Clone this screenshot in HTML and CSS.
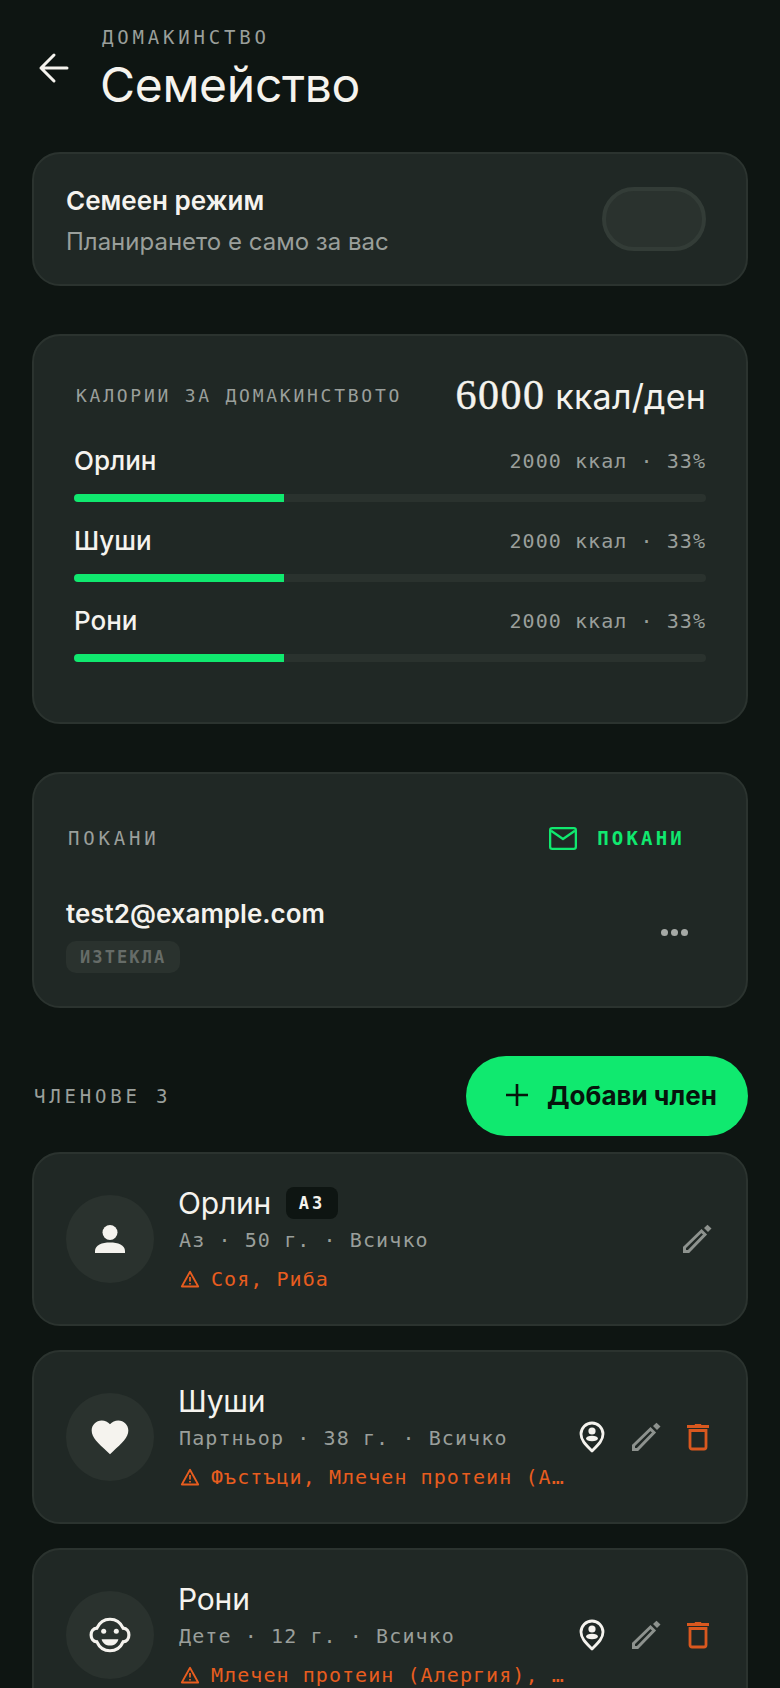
FILE: index.html
```html
<!DOCTYPE html>
<html lang="bg">
<head>
<meta charset="utf-8">
<title>Семейство</title>
<link rel="stylesheet" href="styles.css">
</head>
<body>
<main class="page">
  <header class="top">
    <svg class="back" viewBox="0 0 32 32"><path d="M29 16H3M16 3 3 16l13 13"/></svg>
    <div class="top-text">
      <div class="eyebrow">ДОМАКИНСТВО</div>
      <h1 class="title">Семейство</h1>
    </div>
  </header>

  <section class="card mode">
    <div class="mode-text">
      <div class="mode-title">Семеен режим</div>
      <div class="mode-sub">Планирането е само за вас</div>
    </div>
    <div class="toggle"></div>
  </section>

  <section class="card cal">
    <div class="cal-head">
      <span class="label cal-label">КАЛОРИИ ЗА ДОМАКИНСТВОТО</span>
      <span class="total"><span class="total-num">6000</span> ккал/ден</span>
    </div>
    <div class="cal-row">
      <div class="cal-line"><span class="cal-name">Орлин</span><span class="cal-val">2000 ккал · 33%</span></div>
      <div class="bar"><div class="fill"></div></div>
    </div>
    <div class="cal-row">
      <div class="cal-line"><span class="cal-name">Шуши</span><span class="cal-val">2000 ккал · 33%</span></div>
      <div class="bar"><div class="fill"></div></div>
    </div>
    <div class="cal-row">
      <div class="cal-line"><span class="cal-name">Рони</span><span class="cal-val">2000 ккал · 33%</span></div>
      <div class="bar"><div class="fill"></div></div>
    </div>
  </section>

  <section class="card inv">
    <div class="inv-head">
      <span class="label inv-label">ПОКАНИ</span>
      <span class="inv-btn">
        <svg class="mail" viewBox="0 0 27 22"><rect x="1.100" y="1.100" width="24.800" height="19.800" rx="2"/><path d="M2 3.500l11.500 8 11.500-8"/></svg>
        ПОКАНИ
      </span>
    </div>
    <div class="inv-row">
      <div>
        <div class="inv-mail">test2@example.com</div>
        <span class="expired">ИЗТЕКЛА</span>
      </div>
      <div class="dots"><i></i><i></i><i></i></div>
    </div>
  </section>

  <div class="sec-head">
    <span class="label sec-label">ЧЛЕНОВЕ 3</span>
    <span class="add">
      <svg class="plus" viewBox="0 0 24 24"><path d="M12 1v22M1 12h22"/></svg>
      Добави член
    </span>
  </div>

  <section class="card member">
    <div class="avatar">
      <svg class="av-ic" viewBox="0 0 32 32"><circle cx="16" cy="9.500" r="7.500"/><path d="M1 30v-2C1 22 8 19.500 16 19.500S31 22 31 28v2z"/></svg>
    </div>
    <div class="info">
      <div class="name-line"><span class="name">Орлин</span><span class="me">АЗ</span></div>
      <div class="meta">Аз · 50 г. · Всичко</div>
      <div class="warn">
        <svg class="tri" viewBox="0 0 20 18"><path class="tri-o" d="M10 1.800 1.800 16.500h16.400z"/><path class="tri-m" d="M10 7v4.500M10 13v1.500"/></svg>
        <span class="warn-text">Соя, Риба</span>
      </div>
    </div>
    <div class="actions">
      <svg class="ic-edit" viewBox="0 0 30 30"><path class="pen" d="M2.500 23.500 19.500 7 23 10.500 6.500 27.500H2.500z"/><path class="pen-tip" d="M22 4 25.500.8 29.500 4.500 26 8z"/></svg>
    </div>
  </section>

  <section class="card member">
    <div class="avatar">
      <svg class="av-ic av-heart" viewBox="0 0 24 24"><path d="M12 21.350l-1.450-1.320C5.400 15.360 2 12.280 2 8.500 2 5.420 4.420 3 7.500 3c1.740 0 3.410.81 4.500 2.090C13.090 3.810 14.760 3 16.500 3 19.580 3 22 5.420 22 8.500c0 3.780-3.400 6.860-8.550 11.540L12 21.350z"/></svg>
    </div>
    <div class="info">
      <div class="name-line"><span class="name">Шуши</span></div>
      <div class="meta">Партньор · 38 г. · Всичко</div>
      <div class="warn">
        <svg class="tri" viewBox="0 0 20 18"><path class="tri-o" d="M10 1.800 1.800 16.500h16.400z"/><path class="tri-m" d="M10 7v4.500M10 13v1.500"/></svg>
        <span class="warn-text">Фъстъци, Млечен протеин (А…</span>
      </div>
    </div>
    <div class="actions">
      <svg class="ic-pin" viewBox="0 0 26 32"><path class="pin-o" d="M13 30C7 24 2 19.500 2 13a11 11 0 0 1 22 0c0 6.500-5 11-11 17z"/><circle class="pin-f" cx="13" cy="10" r="3.600"/><ellipse class="pin-f" cx="13" cy="17.500" rx="6" ry="2.800"/></svg>
      <svg class="ic-edit" viewBox="0 0 30 30"><path class="pen" d="M2.500 23.500 19.500 7 23 10.500 6.500 27.500H2.500z"/><path class="pen-tip" d="M22 4 25.500.8 29.500 4.500 26 8z"/></svg>
      <svg class="ic-trash" viewBox="0 0 22 28"><path class="tr-o" d="M3 7.500h16V24a2 2 0 0 1-2 2H5a2 2 0 0 1-2-2zM0 3.500h22"/><path class="tr-f" d="M7 3.500 8 1h6l1 2.500z"/></svg>
    </div>
  </section>

  <section class="card member">
    <div class="avatar">
      <svg class="av-ic av-baby" viewBox="0 0 40 34"><path class="bb-o" d="M7.500 10.500C10 5 14.500 2 20 2s10 3 12.500 8.500c3.500.3 5.500 3 5.500 6.500s-2 6.200-5.500 6.500C30 29 25.500 32 20 32S10 29 7.500 23.500C4 23.200 2 20.500 2 17s2-6.200 5.500-6.500z"/><circle class="bb-f" cx="14" cy="13.500" r="2.400"/><circle class="bb-f" cx="26" cy="13.500" r="2.400"/><path class="bb-f" d="M12 21h16c-1 4-4 6-8 6s-7-2-8-6z"/></svg>
    </div>
    <div class="info">
      <div class="name-line"><span class="name">Рони</span></div>
      <div class="meta">Дете · 12 г. · Всичко</div>
      <div class="warn">
        <svg class="tri" viewBox="0 0 20 18"><path class="tri-o" d="M10 1.800 1.800 16.500h16.400z"/><path class="tri-m" d="M10 7v4.500M10 13v1.500"/></svg>
        <span class="warn-text">Млечен протеин (Алергия), …</span>
      </div>
    </div>
    <div class="actions">
      <svg class="ic-pin" viewBox="0 0 26 32"><path class="pin-o" d="M13 30C7 24 2 19.500 2 13a11 11 0 0 1 22 0c0 6.500-5 11-11 17z"/><circle class="pin-f" cx="13" cy="10" r="3.600"/><ellipse class="pin-f" cx="13" cy="17.500" rx="6" ry="2.800"/></svg>
      <svg class="ic-edit" viewBox="0 0 30 30"><path class="pen" d="M2.500 23.500 19.500 7 23 10.500 6.500 27.500H2.500z"/><path class="pen-tip" d="M22 4 25.500.8 29.500 4.500 26 8z"/></svg>
      <svg class="ic-trash" viewBox="0 0 22 28"><path class="tr-o" d="M3 7.500h16V24a2 2 0 0 1-2 2H5a2 2 0 0 1-2-2zM0 3.500h22"/><path class="tr-f" d="M7 3.500 8 1h6l1 2.500z"/></svg>
    </div>
  </section>
</main>
</body>
</html>
```

FILE: styles.css
```css
* { box-sizing: border-box; }
html, body { margin: 0; height: 1688px; overflow: hidden; background: #0e1512; }
body { font-family: "Inter", "Noto Sans", sans-serif; color: #f5f3ee; }
.page { padding: 24px 32px 0; display: flex; flex-direction: column; }

.top { display: flex; align-items: flex-start; gap: 30px; height: 128px; padding-left: 6px; }
.back { width: 32px; height: 32px; margin-top: 28px; fill: none; stroke: #f5f3ee; stroke-width: 3; stroke-linecap: round; stroke-linejoin: round; flex: none; }
.eyebrow { font: 400 19px/26px "DejaVu Sans Mono", monospace; letter-spacing: 3.800px; color: #9a9f9b; padding-left: 2px; }
.title { margin: 5px 0 0; font: 400 48px/60px "Inter", sans-serif; letter-spacing: -.3px; }

.card { background: #202825; border: 2px solid #2b332f; border-radius: 28px; }
.label { font-family: "DejaVu Sans Mono", monospace; font-size: 19px; letter-spacing: 3.800px; color: #9a9f9b; }

.mode { height: 134px; display: flex; justify-content: space-between; align-items: center; padding: 0 40px 0 32px; }
.mode-text { padding-top: 9px; }
.mode-title { font-size: 26px; line-height: 36px; font-weight: 600; }
.mode-sub { font-size: 24px; line-height: 46px; color: #9a9f9b; }
.toggle { width: 104px; height: 64px; border-radius: 32px; background: #2a322e; border: 4px solid #333c37; }

.cal { margin-top: 48px; height: 390px; padding: 36px 40px 0; }
.cal-head { display: flex; justify-content: space-between; align-items: center; height: 46px; margin-bottom: 23px; }
.cal-label { font-size: 18px; letter-spacing: 2.750px; padding-left: 2px; }
.total { font-size: 34px; letter-spacing: .2px; }
.total-num { font-family: "Liberation Serif", serif; font-size: 42px; letter-spacing: 1.500px; -webkit-text-stroke: .4px #f5f3ee; }
.cal-row { height: 80px; }
.cal-line { display: flex; justify-content: space-between; align-items: center; height: 38px; margin-bottom: 15px; }
.cal-name { font-size: 26px; font-weight: 500; }
.cal-val { font: 400 20px "DejaVu Sans Mono", monospace; letter-spacing: 1.060px; color: #9a9f9b; padding-top: 2px; }
.bar { height: 8px; border-radius: 4px; background: #2a322e; overflow: hidden; }
.fill { width: 33.300%; height: 100%; background: #10e96f; }

.inv { margin-top: 48px; height: 236px; padding: 0 32px; }
.inv-head { display: flex; justify-content: space-between; align-items: center; height: 68px; margin-top: 30px; padding: 0 29px 0 2px; }
.inv-btn { display: flex; align-items: center; gap: 20px; font: 700 19px "DejaVu Sans Mono", monospace; letter-spacing: 3.200px; color: #10e96f; }
.mail { width: 28px; height: 23px; fill: none; stroke: #10e96f; stroke-width: 2.200; stroke-linejoin: round; }
.inv-row { display: flex; justify-content: space-between; align-items: center; padding-right: 26px; }
.inv-mail { font-size: 26px; line-height: 36px; font-weight: 600; margin-top: 24px; }
.expired { display: inline-block; margin-top: 9px; height: 32px; padding: 0 14px; border-radius: 10px; background: #2a322e; font: 700 17px/32px "DejaVu Sans Mono", monospace; letter-spacing: 2.100px; color: #666c68; }
.dots { display: flex; gap: 3px; margin-top: 20px; }
.dots i { width: 7px; height: 7px; border-radius: 50%; background: #a5a9a6; }

.sec-head { display: flex; justify-content: space-between; align-items: center; height: 80px; margin-top: 48px; }
.sec-label { padding-left: 2px; }
.add { width: 282px; height: 80px; border-radius: 40px; background: #10e96f; color: #06140c; display: flex; align-items: center; gap: 18px; padding: 0 0 2px 39px; font-size: 26px; font-weight: 700; }
.plus { width: 24px; height: 24px; fill: none; stroke: #06140c; stroke-width: 2.600; }

.member { margin-top: 16px; height: 174px; display: flex; align-items: center; padding: 0 37px 0 32px; }
.member + .member { margin-top: 24px; }
.avatar { width: 88px; height: 88px; border-radius: 50%; background: #2a322e; display: flex; align-items: center; justify-content: center; flex: none; margin-right: 24px; }
.av-ic { width: 32px; height: 32px; fill: #f5f3ee; }
.av-heart { width: 44px; height: 44px; }
.av-baby { width: 42px; height: 36px; }
.bb-o { fill: none; stroke: #f5f3ee; stroke-width: 3; }
.info { flex: 1; min-width: 0; }
.name-line { display: flex; align-items: center; gap: 15px; height: 40px; margin-top: -1px; }
.name { font-size: 30px; letter-spacing: -.2px; }
.me { width: 52px; height: 32px; border-radius: 8px; background: #0e1512; font: 700 17px/32px "DejaVu Sans Mono", monospace; letter-spacing: 3px; text-align: center; }
.meta { font: 400 20px/32px "DejaVu Sans Mono", monospace; letter-spacing: 1.100px; color: #9a9f9b; margin-top: 1px; padding-left: 1px; }
.warn { display: flex; align-items: center; gap: 11px; font: 400 20px/32px "DejaVu Sans Mono", monospace; letter-spacing: 1.060px; color: #e85d1f; margin-top: 7px; padding-left: 2px; }
.tri { width: 20px; height: 18px; flex: none; }
.tri-o { fill: none; stroke: #e85d1f; stroke-width: 1.800; stroke-linejoin: round; }
.tri-m { fill: none; stroke: #e85d1f; stroke-width: 1.800; }
.warn-text { white-space: nowrap; }
.actions { display: flex; align-items: center; gap: 26px; flex: none; }
.ic-pin { width: 26px; height: 32px; }
.pin-o { fill: none; stroke: #f5f3ee; stroke-width: 2.800; stroke-linejoin: round; }
.pin-f { fill: #f5f3ee; }
.ic-edit { width: 30px; height: 30px; }
.ic-edit:only-child { margin-right: -3px; }
.pen { fill: none; stroke: #8d928e; stroke-width: 3; }
.pen-tip { fill: #8d928e; }
.ic-trash { width: 22px; height: 28px; }
.tr-o { fill: none; stroke: #d9581f; stroke-width: 2.800; }
.tr-f { fill: #d9581f; }
```
